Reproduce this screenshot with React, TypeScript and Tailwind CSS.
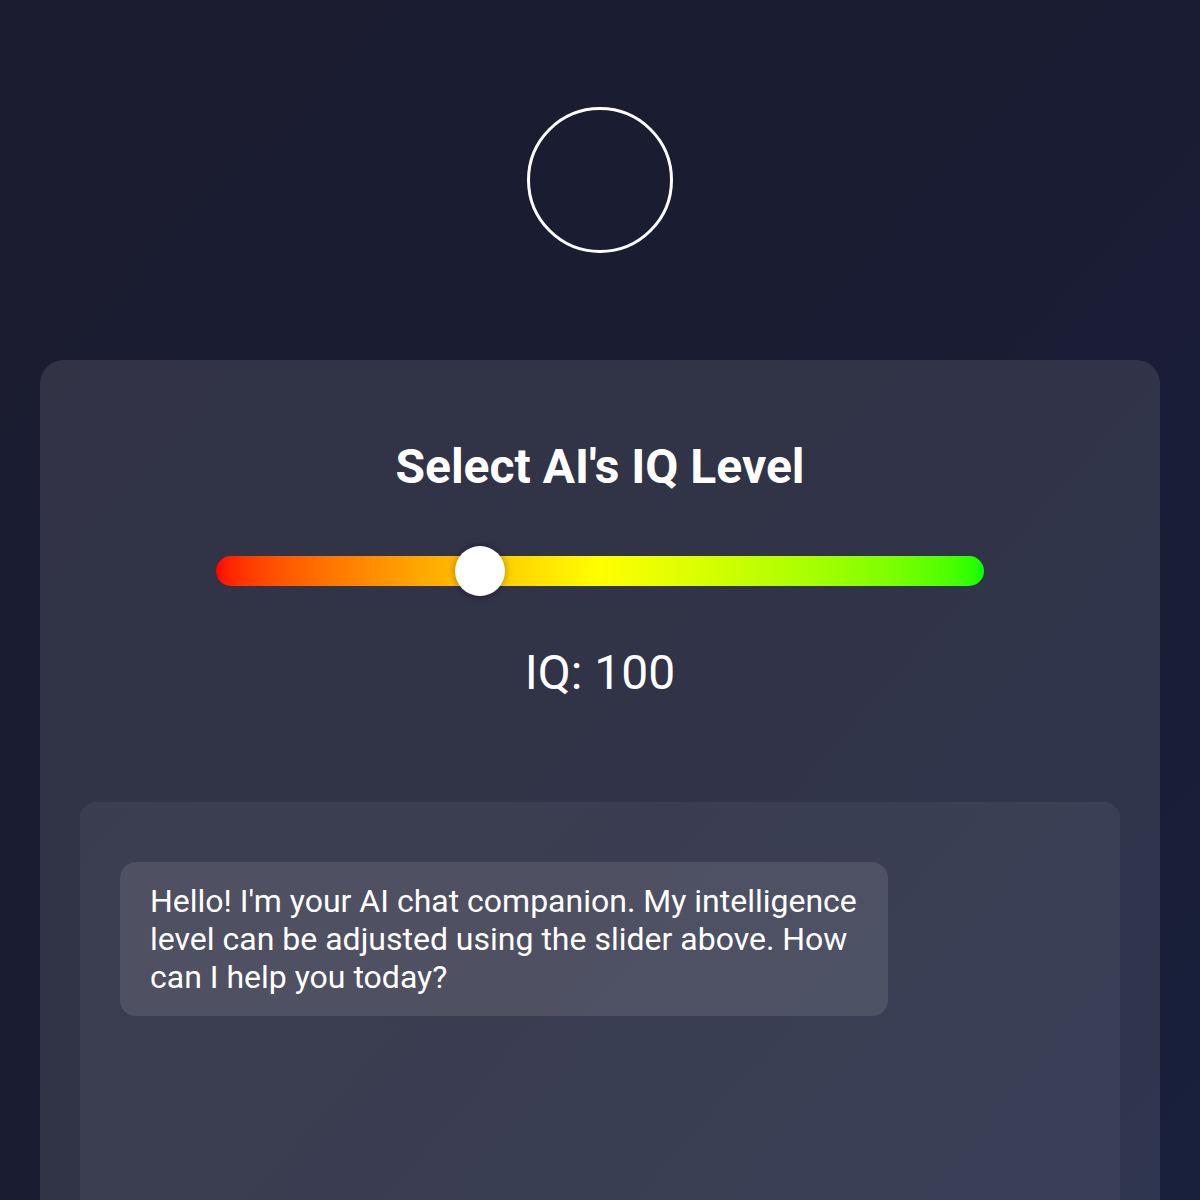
import React from "react";

export default function App() {
  const min = 50;
  const max = 200;
  const value = 100;
  const pct = (value - min) / (max - min);
  return (
    <div
      className="min-h-screen w-full bg-gradient-to-br from-[#1b1c2f] via-[#1a1c33] to-[#17203c] text-white"
      style={{ fontFamily: "Roboto, 'Liberation Sans', sans-serif" }}
    >
      <div className="h-[360px] flex items-center justify-center">
        <div className="w-[146px] h-[146px] rounded-full border-[3px] border-white" />
      </div>
      <div className="mx-[40px] rounded-[24px] bg-white/10 px-[40px] pt-[78px] pb-[40px]">
        <h1 className="text-center text-[48px] leading-[58px] font-bold">Select AI's IQ Level</h1>
        <div className="mt-[50px] flex justify-center">
          <div className="relative w-[768px] h-[50px] flex items-center">
            <div className="w-full h-[30px] rounded-full bg-gradient-to-r from-[#ff0000] via-[#ffff00] to-[#00ff00]" />
            <div
              className="absolute top-0 w-[50px] h-[50px] rounded-full bg-white shadow-[0_0_8px_rgba(0,0,0,0.35)]"
              style={{ left: `calc(${pct} * (100% - 50px))` }}
            />
          </div>
        </div>
        <div className="mt-[48px] text-center text-[48px] leading-[58px]">IQ: {value}</div>
        <div className="mt-[100px] rounded-[16px] bg-white/5 px-[40px] pt-[60px] h-[520px]">
          <div className="max-w-[80%] rounded-[16px] bg-white/10 pl-[30px] pr-[26px] py-[20px] text-[32px] leading-[38px]">
            Hello! I'm your AI chat companion. My intelligence level can be adjusted using the slider above. How can I help you today?
          </div>
        </div>
      </div>
    </div>
  );
}
